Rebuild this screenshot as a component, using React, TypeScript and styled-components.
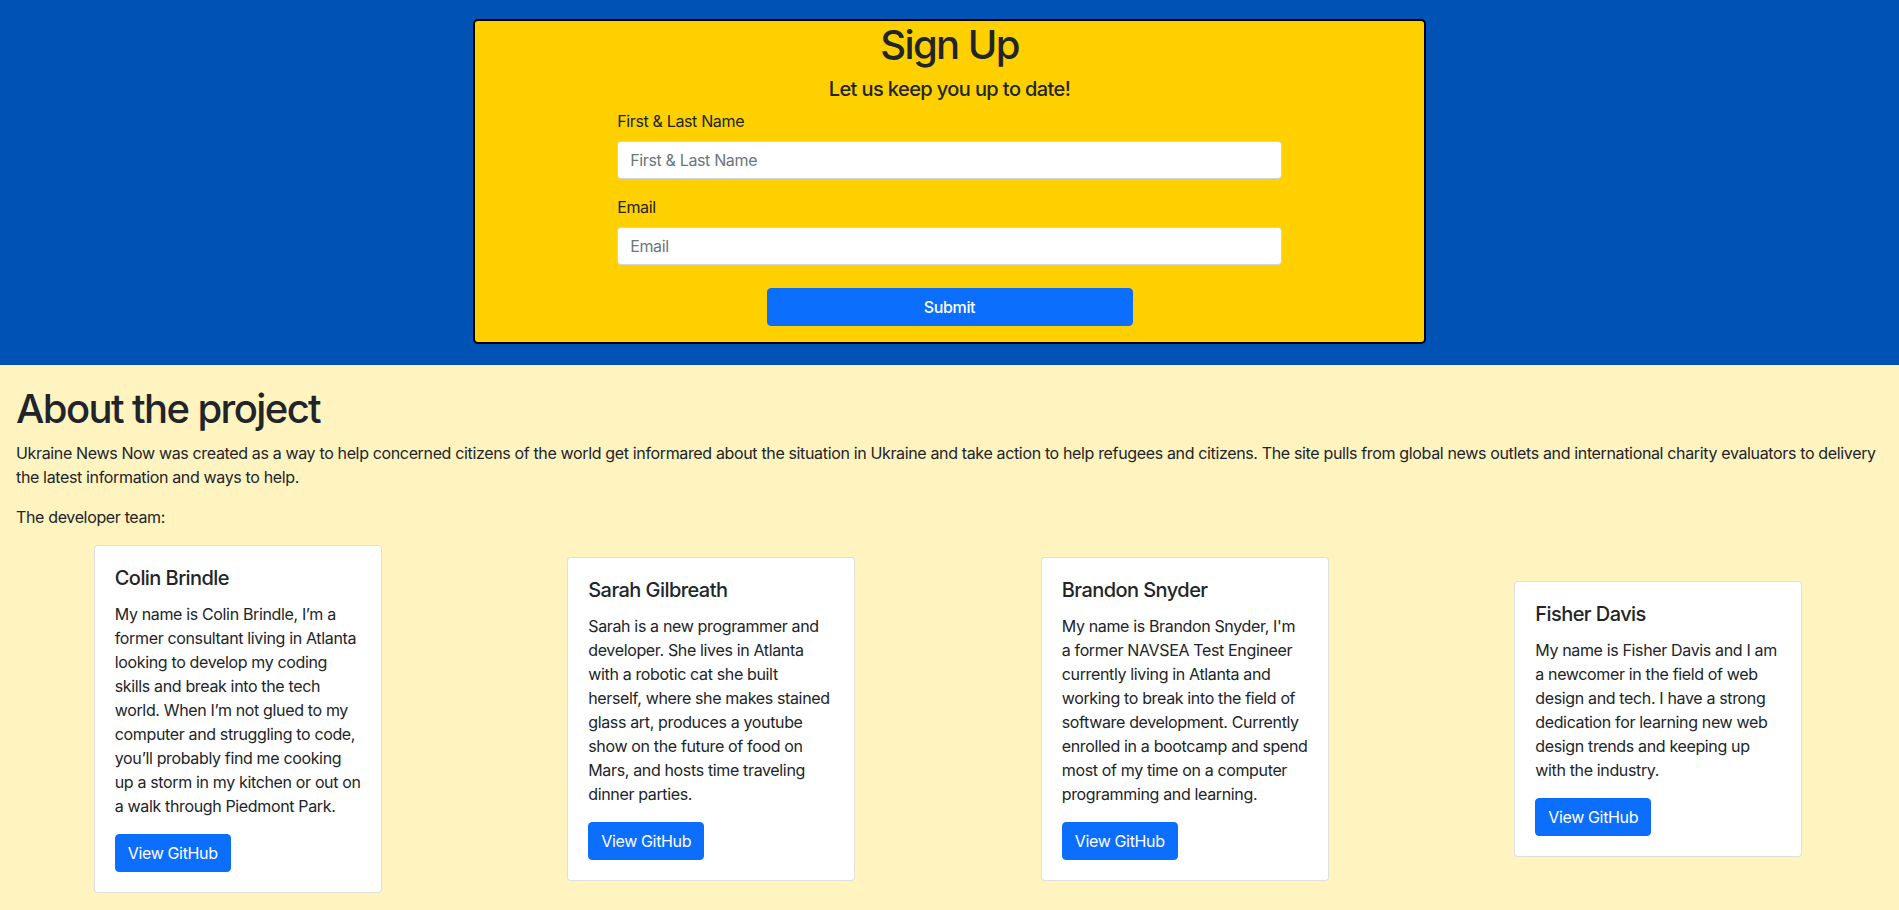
import React from "react";
import styled, { createGlobalStyle } from "styled-components";

const Global = createGlobalStyle`
  * { box-sizing: border-box; }
  html, body { margin: 0; padding: 0; }
  body {
    background: #fff3c0;
    color: #212529;
    font-family: "Inter", "Liberation Sans", sans-serif;
    font-size: 16px;
    line-height: 1.5;
    letter-spacing: -0.022em;
    min-height: 100vh;
  }
`;

const SignUpSection = styled.section`
  background: #0052b4;
  padding: 19px 0 21px;
`;

const SignUpBox = styled.div`
  width: 50%;
  box-sizing: content-box;
  margin: 0 auto;
  background: #ffd000;
  border: 2px solid #000;
  border-radius: 5px;
  padding-bottom: 16px;
  text-align: center;
`;

const Title = styled.h1`
  margin: 0 0 8px;
  font-size: 40px;
  line-height: 1.2;
  font-weight: 500;
  letter-spacing: -0.04em;
`;

const Subtitle = styled.h5`
  margin: 0 0 8px;
  font-size: 20px;
  line-height: 1.2;
  font-weight: 500;
  letter-spacing: -0.03em;
`;

const Form = styled.form`
  width: 70%;
  margin: 0 auto;
  text-align: left;
`;

const Group = styled.div`
  margin-bottom: 16px;
`;

const Label = styled.label`
  display: block;
  margin-bottom: 8px;
  font-size: 16px;
  line-height: 24px;
`;

const Input = styled.input`
  display: block;
  width: 100%;
  height: 38px;
  padding: 6px 12px;
  font-family: inherit;
  font-size: 16px;
  line-height: 24px;
  letter-spacing: inherit;
  color: #495057;
  background: #fff;
  border: 1px solid #ced4da;
  border-radius: 4px;
  outline: none;
  &::placeholder { color: #6c757d; }
`;

const ButtonRow = styled.div`
  display: flex;
  justify-content: center;
  padding-top: 7px;
`;

const PrimaryButton = styled.button<{ $wide?: boolean }>`
  display: inline-block;
  width: ${(p) => (p.$wide ? "366px" : "auto")};
  height: 38px;
  padding: 6px 12px;
  font-family: inherit;
  font-size: 16px;
  line-height: 24px;
  letter-spacing: inherit;
  font-weight: ${(p) => (p.$wide ? 500 : 400)};
  color: #fff;
  background: #0b6efd;
  border: 1px solid #0b6efd;
  border-radius: 4px;
  cursor: pointer;
`;

const About = styled.section`
  padding: 20px 0 0;
`;

const AboutText = styled.div`
  padding: 0 16px;
`;

const AboutTitle = styled.h1`
  margin: 0 0 8px;
  font-size: 40px;
  line-height: 1.2;
  font-weight: 500;
  letter-spacing: -0.04em;
`;

const Para = styled.p`
  margin: 0 0 16px;
`;

const CardRow = styled.div`
  display: grid;
  grid-template-columns: repeat(4, 1fr);
  align-items: center;
  justify-items: center;
  padding: 0 4px 0 1px;
`;

const Card = styled.div`
  width: 288px;
  background: #fff;
  border: 1px solid rgba(0, 0, 0, 0.125);
  border-radius: 4px;
  padding: 20px;
`;

const CardTitle = styled.h5`
  margin: 0 0 12px;
  font-size: 20px;
  line-height: 1.2;
  font-weight: 500;
  letter-spacing: -0.028em;
`;

const CardText = styled.p`
  margin: 0 0 16px;
  font-size: 16px;
  line-height: 24px;
`;

const team = [
  {
    name: "Colin Brindle",
    text: "My name is Colin Brindle, I\u2019m a former consultant living in Atlanta looking to develop my coding skills and break into the tech world. When I\u2019m not glued to my computer and struggling to code, you\u2019ll probably find me cooking up a storm in my kitchen or out on a walk through Piedmont Park.",
  },
  {
    name: "Sarah Gilbreath",
    text: "Sarah is a new programmer and developer. She lives in Atlanta with a robotic cat she built herself, where she makes stained glass art, produces a youtube show on the future of food on Mars, and hosts time traveling dinner parties.",
  },
  {
    name: "Brandon Snyder",
    text: "My name is Brandon Snyder, I'm a former NAVSEA Test Engineer currently living in Atlanta and working to break into the field of software development. Currently enrolled in a bootcamp and spend most of my time on a computer programming and learning.",
  },
  {
    name: "Fisher Davis",
    text: "My name is Fisher Davis and I am a newcomer in the field of web design and tech. I have a strong dedication for learning new web design trends and keeping up with the industry.",
  },
];

export default function App() {
  return (
    <>
      <Global />
      <SignUpSection>
        <SignUpBox>
          <Title>Sign Up</Title>
          <Subtitle>Let us keep you up to date!</Subtitle>
          <Form onSubmit={(e) => e.preventDefault()}>
            <Group>
              <Label htmlFor="name">First &amp; Last Name</Label>
              <Input id="name" type="text" placeholder="First & Last Name" />
            </Group>
            <Group>
              <Label htmlFor="email">Email</Label>
              <Input id="email" type="email" placeholder="Email" />
            </Group>
          </Form>
          <ButtonRow>
            <PrimaryButton $wide type="submit">Submit</PrimaryButton>
          </ButtonRow>
        </SignUpBox>
      </SignUpSection>
      <About>
        <AboutText>
          <AboutTitle>About the project</AboutTitle>
          <Para>
            Ukraine News Now was created as a way to help concerned citizens of the world get informared about the
            situation in Ukraine and take action to help refugees and citizens. The site pulls from global news outlets
            and international charity evaluators to delivery the latest information and ways to help.
          </Para>
          <Para>The developer team:</Para>
        </AboutText>
        <CardRow>
          {team.map((m) => (
            <Card key={m.name}>
              <CardTitle>{m.name}</CardTitle>
              <CardText>{m.text}</CardText>
              <PrimaryButton type="button">View GitHub</PrimaryButton>
            </Card>
          ))}
        </CardRow>
      </About>
    </>
  );
}
